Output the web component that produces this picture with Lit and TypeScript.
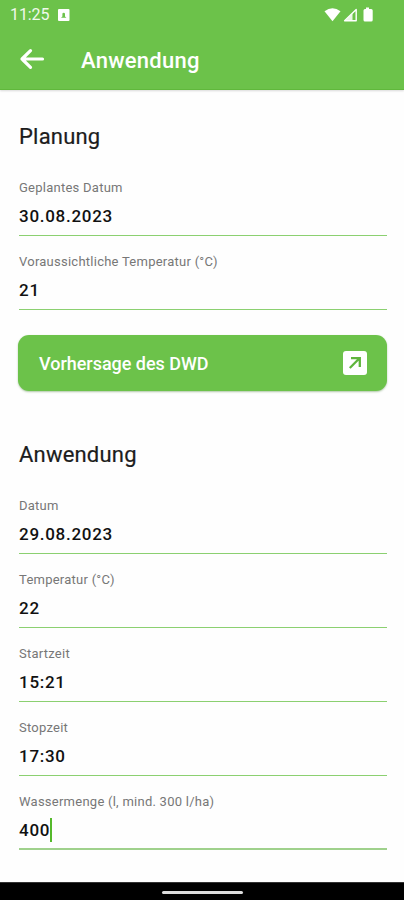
import { LitElement, html, css } from "lit";
import { customElement, property } from "lit/decorators.js";

@customElement("form-field")
class FormField extends LitElement {
  @property() label = "";
  @property() value = "";
  @property({ type: Boolean, reflect: true }) active = false;

  static styles = css`
    :host {
      box-sizing: border-box;
      display: flex;
      flex-direction: column;
      height: 74px;
      padding-top: 18px;
      border-bottom: 1px solid #8bd070;
    }
    :host([active]) {
      border-bottom: 2px solid #9fd18c;
    }
    .label {
      font-size: 13px;
      line-height: 16px;
      letter-spacing: 0.25px;
      color: #777;
    }
    .value {
      display: flex;
      flex: none;
      align-items: center;
      margin-top: 8px;
      height: 24px;
      font-size: 17px;
      font-weight: 500;
      letter-spacing: 0.72px;
      color: #111;
    }
    .caret {
      width: 2px;
      height: 24px;
      margin-left: -0.4px;
      background: #55b92c;
    }
  `;

  render() {
    return html`
      <div class="label">${this.label}</div>
      <div class="value">
        <span>${this.value}</span>${this.active ? html`<span class="caret"></span>` : ""}
      </div>
    `;
  }
}

@customElement("app-root")
class AppRoot extends LitElement {
  static styles = css`
    :host {
      display: flex;
      flex-direction: column;
      width: 404px;
      height: 900px;
      overflow: hidden;
      background: #fefefe;
      font-family: Roboto, "Liberation Sans", sans-serif;
    }
    svg {
      display: block;
    }
    header {
      box-sizing: border-box;
      flex: none;
      height: 90px;
      background: #6cc24a;
      border-bottom: 1px solid #60b83c;
      box-shadow: 0 1px 2px rgba(0, 0, 0, 0.15);
      color: #fff;
    }
    .status {
      display: flex;
      align-items: center;
      height: 29px;
      padding: 0 29px 0 10px;
    }
    .time {
      font-size: 16px;
      letter-spacing: -0.1px;
      color: #f0f9ec;
      margin-right: 9px;
    }
    .signals {
      margin-left: auto;
    }
    .bar {
      display: flex;
      align-items: center;
      height: 60px;
      padding-left: 19px;
    }
    .bar h1 {
      margin: 2px 0 0 36px;
      font-size: 22px;
      font-weight: 500;
      letter-spacing: 0.25px;
    }
    main {
      flex: 1;
      padding: 0 17px 0 19px;
    }
    h2 {
      margin: 0;
      height: 72px;
      padding-top: 33px;
      box-sizing: border-box;
      font-size: 22px;
      line-height: 28px;
      font-weight: 400;
      letter-spacing: 0.2px;
      color: #1c1c1c;
      -webkit-text-stroke: 0.2px #1c1c1c;
    }
    .forecast {
      display: flex;
      align-items: center;
      justify-content: space-between;
      box-sizing: border-box;
      width: 369px;
      height: 56px;
      margin: 25px 0 17px -1px;
      padding: 0 20px 0 21px;
      border: 0;
      border-radius: 11px;
      background: #6cc24a;
      box-shadow: 0 1px 2px rgba(60, 120, 40, 0.4);
      color: #fff;
      font: 500 18px Roboto, "Liberation Sans", sans-serif;
      letter-spacing: -0.02px;
    }
    .navbar {
      display: flex;
      justify-content: center;
      align-items: center;
      height: 18px;
      padding-top: 2px;
      box-sizing: border-box;
      background: #000;
      border-top: 1px solid #333;
    }
    .handle {
      width: 81px;
      height: 3px;
      border-radius: 2px;
      background: #ddd;
    }
  `;

  render() {
    return html`
      <header>
        <div class="status">
          <span class="time">11:25</span>
          <svg width="12" height="12" viewBox="0 0 12 12">
            <rect width="11.5" height="12" rx="1" fill="#fff" />
            <path d="M3 8.800L4.400 7.400V5a1.300 1.300 0 0 1 2.600 0v2.400L8.500 8.800Z" fill="#6cc24a" />
          </svg>
          <svg class="signals" width="51" height="16" viewBox="0 0 51 16">
            <path d="M0.5 4.300Q8.500 -1.900 16.500 4.300L8.500 14.200Z" fill="#fff" />
            <path d="M32.200 2.500V13.700H20.600Z" fill="none" stroke="#fff" stroke-width="1.400" stroke-linejoin="round" />
            <path d="M28.500 6.500V13.500H21.500Z" fill="#fff" opacity="0.85" />
            <path d="M42 0.500H45V2H47.200Q48.700 2 48.700 3.500V13Q48.700 14.500 47.200 14.500H41Q39.500 14.500 39.500 13V3.500Q39.500 2 41 2H42Z" fill="#fff" />
          </svg>
        </div>
        <div class="bar">
          <svg width="26" height="22" viewBox="0 0 26 22">
            <path d="M23.500 11H3M11.500 2.700L3 11L11.500 19.300" fill="none" stroke="#fff" stroke-width="3.200" stroke-linecap="round" stroke-linejoin="round" />
          </svg>
          <h1>Anwendung</h1>
        </div>
      </header>
      <main>
        <section>
          <h2>Planung</h2>
          <form-field label="Geplantes Datum" value="30.08.2023"></form-field>
          <form-field label="Voraussichtliche Temperatur (°C)" value="21"></form-field>
        </section>
        <button class="forecast">
          <span>Vorhersage des DWD</span>
          <svg width="24" height="24" viewBox="0 0 24 24">
            <rect width="24" height="24" rx="3" fill="#fff" />
            <path d="M6.800 17L16.500 7.300M8 7.200H16.800V16" fill="none" stroke="#5fb53c" stroke-width="2.300" />
          </svg>
        </button>
        <section>
          <h2>Anwendung</h2>
          <form-field label="Datum" value="29.08.2023"></form-field>
          <form-field label="Temperatur (°C)" value="22"></form-field>
          <form-field label="Startzeit" value="15:21"></form-field>
          <form-field label="Stopzeit" value="17:30"></form-field>
          <form-field label="Wassermenge (l, mind. 300 l/ha)" value="400" active></form-field>
        </section>
      </main>
      <div class="navbar"><div class="handle"></div></div>
    `;
  }
}
